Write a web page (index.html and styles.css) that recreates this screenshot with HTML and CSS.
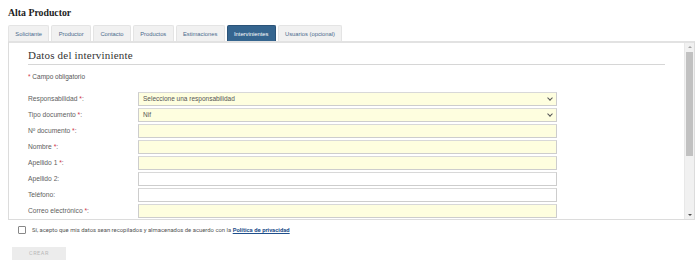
FILE: index.html
```html
<!DOCTYPE html>
<html lang="es">
<head>
    <meta charset="UTF-8">
    <meta name="viewport" content="width=device-width, initial-scale=1.0">
    <title>Alta Productor</title>
    <link rel="stylesheet" href="styles.css">
</head>
<body>
    <h1>Alta Productor</h1>

    <ul class="tabs">
        <li>Solicitante</li>
        <li>Productor</li>
        <li>Contacto</li>
        <li>Productos</li>
        <li>Estimaciones</li>
        <li class="active">Intervinientes</li>
        <li>Usuarios (opcional)</li>
    </ul>

    <div class="panel">
        <div class="panel-inner">
            <h2>Datos del interviniente</h2>
            <p class="note"><span class="req">*</span> Campo obligatorio</p>

            <div class="form">
                <label>Responsabilidad <span class="req">*</span>:</label>
                <div class="field required select">Seleccione una responsabilidad<span class="caret"></span></div>

                <label>Tipo documento <span class="req">*</span>:</label>
                <div class="field required select">Nif<span class="caret"></span></div>

                <label>Nº documento <span class="req">*</span>:</label>
                <div class="field required"></div>

                <label>Nombre <span class="req">*</span>:</label>
                <div class="field required"></div>

                <label>Apellido 1 <span class="req">*</span>:</label>
                <div class="field required"></div>

                <label>Apellido 2:</label>
                <div class="field"></div>

                <label>Teléfono:</label>
                <div class="field"></div>

                <label>Correo electrónico <span class="req">*</span>:</label>
                <div class="field required"></div>

                <label>Cargo:</label>
                <div class="field"></div>

                <label>Dirección:</label>
                <div class="field"></div>

                <label>Código postal:</label>
                <div class="field"></div>

                <label>Provincia:</label>
                <div class="field"></div>
            </div>
        </div>

        <!-- scroll bar of the form area -->
        <div class="scrollbar">
            <span class="sb-btn up"></span>
            <div class="sb-track"><div class="sb-thumb"></div></div>
            <span class="sb-btn down"></span>
        </div>
    </div>

    <div class="consent">
        <span class="check"></span>
        <span>Sí, acepto que mis datos sean recopilados y almacenados de acuerdo con la <a href="#">Política de privacidad</a></span>
    </div>

    <button class="btn-create" disabled>CREAR</button>
</body>
</html>
```

FILE: styles.css
```css
body {
    margin: 0;
    padding: 6px 3px 0 8px;
    font-family: "Liberation Sans", Arial, sans-serif;
    color: #444;
    background: #fff;
}
h1 {
    margin: 0;
    font: bold 9.8px/14px "Liberation Serif", serif;
    color: #222;
}
.tabs {
    display: flex;
    gap: 2px;
    list-style: none;
    margin: 5px 0 0 0;
    padding: 0;
}
.tabs li {
    height: 16px;
    line-height: 16px;
    padding: 0 6.3px;
    font-size: 5.8px;
    color: #4a6a8c;
    background: #f1f1f1;
    border: 1px solid #e4e4e4;
    border-bottom: none;
    box-sizing: border-box;
    border-radius: 2px 2px 0 0;
}
.tabs li.active {
    background: #35658f;
    border-color: #2b5378;
    color: #fff;
}
.panel {
    display: flex;
    height: 179px;
    box-sizing: border-box;
    border: 1px solid #dcdcdc;
    border-top: 2px solid #e2e2e2;
    overflow: hidden;
}
.panel-inner {
    flex: 1;
    overflow: hidden;
    padding: 0 19px 12px 19px;
}
.scrollbar {
    width: 9px;
    display: flex;
    flex-direction: column;
    background: #f1f1f1;
    border-left: 1px solid #e8e8e8;
}
.sb-btn {
    height: 8px;
    display: flex;
    justify-content: center;
    align-items: center;
}
.sb-btn::after {
    content: "";
    border-left: 2px solid transparent;
    border-right: 2px solid transparent;
}
.sb-btn.up::after {
    border-bottom: 2px solid #a3a3a3;
}
.sb-btn.down::after {
    border-top: 2px solid #505050;
}
.sb-track {
    flex: 1;
}
.sb-thumb {
    height: 104px;
    margin: 1px 1px 0 1px;
    background: #c1c1c1;
}
h2 {
    margin: 0;
    padding-top: 6px;
    padding-bottom: 2px;
    font: normal 11px/13px "Liberation Serif", serif;
    letter-spacing: 0.2px;
    color: #333;
    border-bottom: 1px solid #d6d6d6;
}
.note {
    margin: 6px 0 0 0;
    font-size: 6.5px;
    line-height: 12px;
    color: #555;
}
.req {
    color: #d0344a;
}
.form {
    display: grid;
    grid-template-columns: 110px 419px;
    row-gap: 2px;
    margin-top: 9px;
}
.form label {
    font-size: 6.7px;
    line-height: 14px;
    color: #606060;
}
.field {
    position: relative;
    height: 14px;
    box-sizing: border-box;
    border: 1px solid #cdcdcd;
    border-top-color: #d8d8d8;
    background: #fff;
    font-size: 6.5px;
    line-height: 12px;
    padding-left: 4px;
    color: #555;
}
.field.required {
    background: #fefedf;
}
.caret {
    position: absolute;
    right: 4px;
    top: 3px;
    width: 3px;
    height: 3px;
    border-right: 1px solid #555;
    border-bottom: 1px solid #555;
    transform: rotate(45deg);
}
.consent {
    display: flex;
    align-items: center;
    gap: 6px;
    margin: 5px 0 0 10px;
    font-family: Roboto, "Liberation Sans", sans-serif;
    font-size: 5.9px;
    line-height: 10px;
    color: #555;
}
.check {
    flex: none;
    width: 6px;
    height: 6px;
    border: 1px solid #888;
    border-radius: 1px;
}
.consent a {
    color: #1f4f8c;
    font-weight: bold;
}
.btn-create {
    display: block;
    margin: 12px 0 0 4px;
    width: 54px;
    height: 13px;
    padding: 0;
    line-height: 13px;
    border: none;
    background: #ececec;
    color: #b8b8b8;
    font-family: Roboto, "Liberation Sans", sans-serif;
    font-size: 5.5px;
    letter-spacing: 0.6px;
}
```
